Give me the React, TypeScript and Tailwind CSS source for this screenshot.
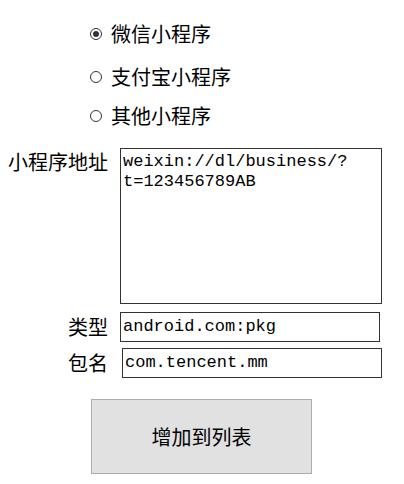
import React from "react"

const CJK = "font-['SimSun','Noto_Sans_CJK_SC',sans-serif]"
const MONO = "font-['Liberation_Mono','Noto_Sans_CJK_SC',monospace]"

function Radio({ label, checked }: { label: string; checked?: boolean }) {
  return (
    <div className="flex items-center">
      <span className="flex h-[12px] w-[12px] items-center justify-center rounded-full border border-[#333]">
        {checked && <span className="h-[6px] w-[6px] rounded-full bg-[#333]" />}
      </span>
      <span className="ml-[9px] text-[20px] leading-[24px] text-black">{label}</span>
    </div>
  )
}

export default function App() {
  return (
    <div className={`h-[484px] w-[404px] bg-white ${CJK}`}>
      <div className="flex flex-col pl-[90px] pt-[22px]">
        <Radio label="微信小程序" checked />
        <div className="mt-[19px]">
          <Radio label="支付宝小程序" />
        </div>
        <div className="mt-[15px]">
          <Radio label="其他小程序" />
        </div>
      </div>

      <div className="mt-[20px] flex">
        <div className="w-[120px] pl-[8px] pt-[2px] text-[20px] leading-[24px]">小程序地址</div>
        <div
          className={`h-[156px] w-[262px] border border-[#333] px-[2px] pt-[3px] text-[17px] leading-[20px] break-all ${MONO}`}
        >
          weixin://dl/business/?
          <br />
          t=123456789AB
        </div>
      </div>

      <div className="mt-[8px] flex items-center">
        <div className="w-[120px] pr-[12px] text-right text-[20px] leading-[24px]">类型</div>
        <div className={`flex h-[30px] w-[260px] items-center border border-[#333] px-[2px] text-[17px] ${MONO}`}>
          android.com:pkg
        </div>
      </div>

      <div className="mt-[6px] flex items-center">
        <div className="w-[122px] pr-[14px] text-right text-[20px] leading-[24px]">包名</div>
        <div className={`flex h-[30px] w-[260px] items-center border border-[#333] px-[2px] text-[17px] ${MONO}`}>
          com.tencent.mm
        </div>
      </div>

      <div className="mt-[21px] pl-[91px]">
        <button className="flex h-[75px] w-[221px] items-center justify-center border border-[#adadad] bg-[#e1e1e1] text-[20px]">
          增加到列表
        </button>
      </div>
    </div>
  )
}
